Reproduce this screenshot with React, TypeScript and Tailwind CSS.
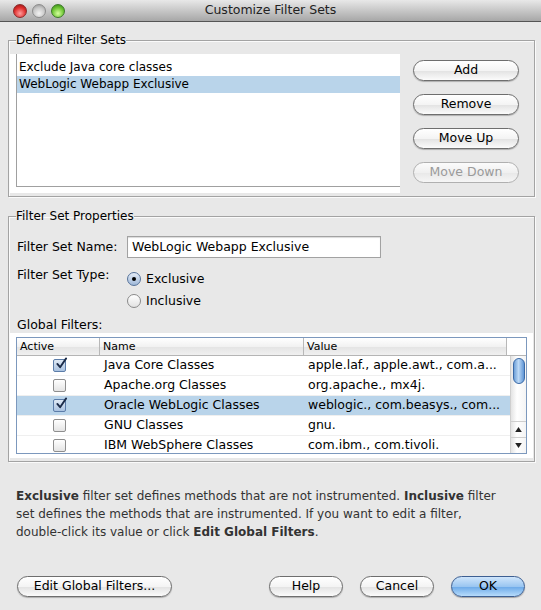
import React from "react";

const font = "font-['DejaVu_Sans',sans-serif]";

const AquaButton: React.FC<{
  label: string;
  className?: string;
  disabled?: boolean;
  primary?: boolean;
}> = ({ label, className = "", disabled, primary }) => {
  let look =
    "border-[#6e6e6e] bg-[linear-gradient(#ffffff,#f4f4f4_50%,#e2e2e2_51%,#fbfbfb)] text-black shadow-[0_1px_1px_rgba(0,0,0,0.25)]";
  if (disabled)
    look =
      "border-[#b0b0b0] bg-[linear-gradient(#fbfbfb,#f0f0f0_50%,#e8e8e8_51%,#f6f6f6)] text-[#9a9a9a]";
  if (primary)
    look =
      "border-[#3d5f92] bg-[linear-gradient(#cfe5fb,#9ac6f1_50%,#6aa8e8_51%,#b7dcfb)] text-black shadow-[0_1px_1px_rgba(0,0,0,0.3)]";
  return (
    <div
      className={`h-[21px] rounded-full border flex items-center justify-center text-[12.5px] leading-none ${look} ${className}`}
    >
      {label}
    </div>
  );
};

const Checkbox: React.FC<{ checked?: boolean }> = ({ checked }) => (
  <div
    className={`relative w-[13px] h-[13px] rounded-[2px] border ${
      checked
        ? "border-[#5b7ca8] bg-[linear-gradient(#dfe9f5,#a9c2e0)]"
        : "border-[#8e8e8e] bg-[linear-gradient(#ffffff,#e4e4e4)]"
    }`}
  >
    {checked && (
      <svg
        viewBox="0 0 14 14"
        className="absolute left-[1px] top-[-3px] w-[13px] h-[13px]"
      >
        <path
          d="M2.5 7.5 L5.5 11 L12 1.5"
          fill="none"
          stroke="#1b2b48"
          strokeWidth="2"
          strokeLinecap="round"
          strokeLinejoin="round"
        />
      </svg>
    )}
  </div>
);

const Radio: React.FC<{ checked?: boolean; label: string }> = ({
  checked,
  label,
}) => (
  <div className="flex items-center gap-[5px] h-[20px]">
    <div
      className={`w-[14px] h-[14px] rounded-full border flex items-center justify-center ${
        checked
          ? "border-[#56729a] bg-[linear-gradient(#e4ecf6,#9fb8d8)]"
          : "border-[#8a8a8a] bg-[linear-gradient(#ffffff,#e2e2e2)]"
      }`}
    >
      {checked && <div className="w-[4px] h-[4px] rounded-full bg-black" />}
    </div>
    <span className="text-[12.5px]">{label}</span>
  </div>
);

const filters = [
  { active: true, name: "Java Core Classes", value: "apple.laf., apple.awt., com.a..." },
  { active: false, name: "Apache.org Classes", value: "org.apache., mx4j." },
  { active: true, name: "Oracle WebLogic Classes", value: "weblogic., com.beasys., com...", selected: true },
  { active: false, name: "GNU Classes", value: "gnu." },
  { active: false, name: "IBM WebSphere Classes", value: "com.ibm., com.tivoli." },
];

const fieldset =
  "border border-[#a3a3a3] shadow-[inset_1px_1px_0_#fafafa,1px_1px_0_#fafafa] ml-2 mr-[6px] px-0";

const App = () => {
  return (
    <div className={`w-[541px] h-[610px] bg-[#e8e8e8] text-black ${font} overflow-hidden`}>
      {/* title bar */}
      <div className="relative h-[22px] bg-[linear-gradient(#e8e8e8,#c4c4c4_55%,#a7a7a7)] border-b border-[#555] flex items-center justify-center">
        <div className="absolute left-[13px] top-[4px] flex gap-[5px]">
          <div className="w-[14px] h-[14px] rounded-full border border-[#8a2a2a] bg-[radial-gradient(circle_at_50%_70%,#ff9d9d,#e0302e_55%,#8e1010)]" />
          <div className="w-[14px] h-[14px] rounded-full border border-[#8c8c8c] bg-[radial-gradient(circle_at_50%_70%,#f2f2f2,#c8c8c8_55%,#8f8f8f)]" />
          <div className="w-[14px] h-[14px] rounded-full border border-[#3d7a2a] bg-[radial-gradient(circle_at_50%_70%,#d5ff9e,#6fc635_55%,#2c7d12)]" />
        </div>
        <span className="text-[12.5px] text-[#222]">Customize Filter Sets</span>
      </div>

      <div className="pt-[11px]">
        {/* Defined filter sets */}
        <fieldset className={`${fieldset} pb-[3px] pl-[1px] pr-[15px]`}>
          <legend className="ml-[6px] px-0 text-[12px] leading-[14px]">Defined Filter Sets</legend>
          <div className="flex pt-[7px]">
            <div className="w-[390px] h-[139px] bg-white pl-[6px] pb-[6px]">
              <div className="h-full border-l border-b border-[#a0a0a0] pt-[5px] text-[12px]">
                <div className="h-[17px] leading-[17px] pl-[2px]">Exclude Java core classes</div>
                <div className="h-[17px] leading-[17px] pl-[2px] bg-[#b9d4ea]">WebLogic Webapp Exclusive</div>
              </div>
            </div>
            <div className="ml-auto flex flex-col gap-[13px] pt-[6px]">
              <AquaButton label="Add" className="w-[106px]" />
              <AquaButton label="Remove" className="w-[106px]" />
              <AquaButton label="Move Up" className="w-[106px]" />
              <AquaButton label="Move Down" className="w-[106px]" disabled />
            </div>
          </div>
        </fieldset>

        {/* Filter set properties */}
        <fieldset className={`${fieldset} mt-[12px] pl-[1px] pr-[1px] pb-[3px]`}>
          <legend className="ml-[6px] px-0 text-[12px] leading-[14px]">Filter Set Properties</legend>
          <div className="pl-[7px] pt-[13px] flex items-center">
            <span className="w-[110px] text-[12.5px]">Filter Set Name:</span>
            <div className="w-[254px] h-[22px] bg-white border border-[#a2a2a2] shadow-[inset_0_1px_1px_rgba(0,0,0,0.15)] pl-[4px] text-[12.5px] leading-[20px]">
              WebLogic Webapp Exclusive
            </div>
          </div>
          <div className="pl-[7px] pt-[8px] flex">
            <span className="w-[110px] text-[12.5px] leading-[18px]">Filter Set Type:</span>
            <div className="flex flex-col gap-[2px] mt-[3px]">
              <Radio checked label="Exclusive" />
              <Radio label="Inclusive" />
            </div>
          </div>
          <div className="pl-[7px] pt-[6px] text-[12.5px] leading-[16px]">Global Filters:</div>
          <div className="bg-white px-[6px] pt-[4px] pb-[4px]">
            <div className="border border-[#7c98bd]">
              {/* header */}
              <div className="flex h-[18px] border-b border-[#b5b5b5] bg-[linear-gradient(#ffffff,#f2f2f2_50%,#e4e4e4_51%,#f0f0f0)] text-[11px] leading-[17px]">
                <div className="w-[83px] pl-[3px] border-r border-[#b8b8b8]">Active</div>
                <div className="w-[204px] pl-[3px] border-r border-[#b8b8b8]">Name</div>
                <div className="w-[203px] pl-[3px] border-r border-[#b8b8b8]">Value</div>
                <div className="flex-1 bg-white" />
              </div>
              <div className="flex h-[97px] overflow-hidden">
                <div className="flex-1">
                  {filters.map((f) => (
                    <div
                      key={f.name}
                      className={`flex h-[20px] items-center text-[12.5px] border-b border-[#efefef] ${
                        f.selected ? "bg-[#b9d4ea]" : "bg-white"
                      }`}
                    >
                      <div className="w-[84px] flex justify-center">
                        <Checkbox checked={f.active} />
                      </div>
                      <div className="w-[204px] pl-[3px] whitespace-nowrap">{f.name}</div>
                      <div className="w-[203px] pl-[3px] whitespace-nowrap">{f.value}</div>
                    </div>
                  ))}
                </div>
                {/* scrollbar */}
                <div className="w-[16px] border-l border-[#cfcfcf] bg-[linear-gradient(90deg,#e4e4e4,#ffffff_40%,#f4f4f4)] flex flex-col">
                  <div className="mx-auto mt-[2px] w-[12px] h-[26px] rounded-full border border-[#3b6aa7] bg-[linear-gradient(90deg,#6d9fd8,#bcd9f6_45%,#5f95d6)]" />
                  <div className="flex-1" />
                  <div className="h-[16px] border-t border-[#cfcfcf] flex items-center justify-center">
                    <svg viewBox="0 0 8 6" className="w-[7px] h-[5px]">
                      <path d="M4 0 L8 6 L0 6 Z" fill="#222" />
                    </svg>
                  </div>
                  <div className="h-[16px] border-t border-[#cfcfcf] flex items-center justify-center">
                    <svg viewBox="0 0 8 6" className="w-[7px] h-[5px]">
                      <path d="M0 0 L8 0 L4 6 Z" fill="#222" />
                    </svg>
                  </div>
                </div>
              </div>
            </div>
          </div>
        </fieldset>

        {/* help text */}
        <p className="pl-4 pr-[24px] pt-[25px] text-[12px] leading-[18px] text-[#333]">
          <b>Exclusive</b> filter set defines methods that are not instrumented.{" "}
          <b>Inclusive</b> filter set defines the methods that are instrumented. If
          you want to edit a filter,{" "}
          <span className="whitespace-nowrap">double-click</span> its value or click{" "}
          <b>Edit Global Filters</b>.
        </p>

        {/* bottom buttons */}
        <div className="flex items-center pl-[17px] pr-[16px] mt-[35px]">
          <AquaButton label="Edit Global Filters..." className="w-[155px]" />
          <div className="flex-1" />
          <AquaButton label="Help" className="w-[74px]" />
          <AquaButton label="Cancel" className="w-[74px] ml-[17px]" />
          <AquaButton label="OK" className="w-[74px] ml-[17px]" primary />
        </div>
      </div>
    </div>
  );
};

export default App;
